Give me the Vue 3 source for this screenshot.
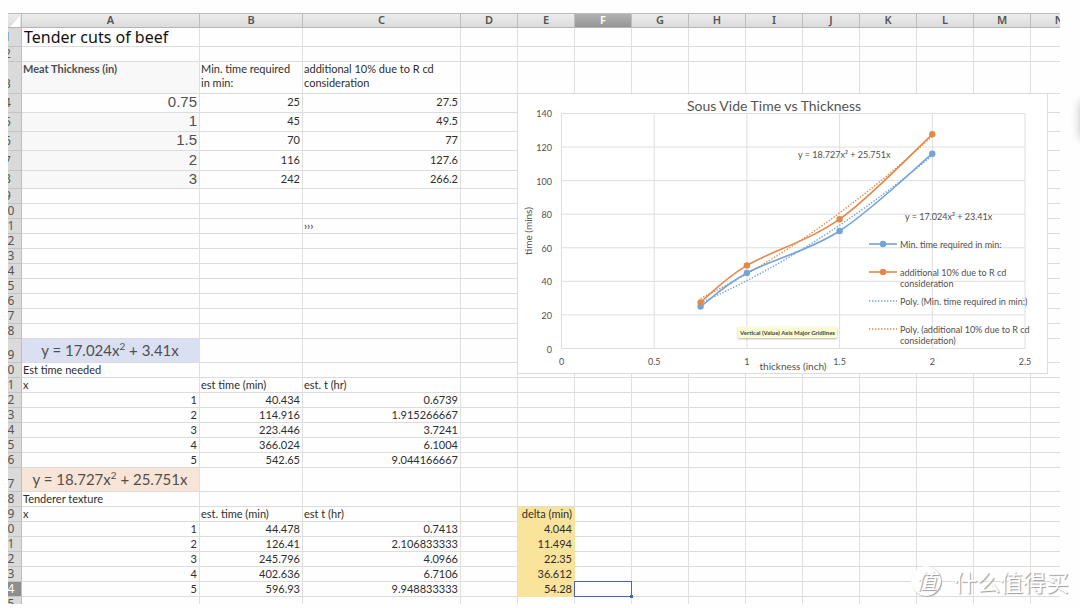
<script setup>
const columns = ['A', 'B', 'C', 'D', 'E', 'F', 'G', 'H', 'I', 'J', 'K', 'L', 'M', 'N']

const content = {
  1: { size: 'mid', A: ['Tender cuts of beef', 'title'] },
  3: {
    size: 'double',
    A: ['Meat Thickness (in)', 'shade strong top'],
    B: ['Min. time required\nin min:', 'top'],
    C: ['additional 10% due to R cd\nconsideration', 'top'],
  },
  4: { size: 'mid', A: ['0.75', 'num arial'], B: ['25', 'num'], C: ['27.5', 'num'] },
  5: { size: 'mid', A: ['1', 'num arial shade'], B: ['45', 'num'], C: ['49.5', 'num'] },
  6: { size: 'mid', A: ['1.5', 'num arial shade'], B: ['70', 'num'], C: ['77', 'num'] },
  7: { size: 'mid-plus', A: ['2', 'num arial shade'], B: ['116', 'num'], C: ['127.6', 'num'] },
  8: { size: 'mid-less', A: ['3', 'num arial shade'], B: ['242', 'num'], C: ['266.2', 'num'] },
  11: { C: ['›››', ''] },
  19: { size: 'tall', A: ['y = 17.024x', 'formula blue', ' + 3.41x'] },
  20: { A: ['Est time needed', ''] },
  21: { A: ['x', ''], B: ['est time (min)', ''], C: ['est. t (hr)', ''] },
  22: { A: ['1', 'num'], B: ['40.434', 'num'], C: ['0.6739', 'num'] },
  23: { A: ['2', 'num'], B: ['114.916', 'num'], C: ['1.915266667', 'num'] },
  24: { A: ['3', 'num'], B: ['223.446', 'num'], C: ['3.7241', 'num'] },
  25: { A: ['4', 'num'], B: ['366.024', 'num'], C: ['6.1004', 'num'] },
  26: { A: ['5', 'num'], B: ['542.65', 'num'], C: ['9.044166667', 'num'] },
  27: { size: 'tall', A: ['y = 18.727x', 'formula peach', ' + 25.751x'] },
  28: { A: ['Tenderer texture', ''] },
  29: { A: ['x', ''], B: ['est. time (min)', ''], C: ['est t (hr)', ''], E: ['delta (min)', 'num yellow'] },
  30: { A: ['1', 'num'], B: ['44.478', 'num'], C: ['0.7413', 'num'], E: ['4.044', 'num yellow'] },
  31: { A: ['2', 'num'], B: ['126.41', 'num'], C: ['2.106833333', 'num'], E: ['11.494', 'num yellow'] },
  32: { A: ['3', 'num'], B: ['245.796', 'num'], C: ['4.0966', 'num'], E: ['22.35', 'num yellow'] },
  33: { A: ['4', 'num'], B: ['402.636', 'num'], C: ['6.7106', 'num'], E: ['36.612', 'num yellow'] },
  34: { A: ['5', 'num'], B: ['596.93', 'num'], C: ['9.948833333', 'num'], E: ['54.28', 'num yellow'], F: ['', 'active'] },
}

const rows = Array.from({ length: 35 }, (_, i) => {
  const number = i + 1
  const row = content[number] || {}
  return {
    number,
    size: row.size || 'base',
    cells: columns.map((name) => {
      const [text = '', kind = '', rest = ''] = row[name] || []
      return { name, text, kind, rest }
    }),
  }
})

const px = (x) => 44.5 + x * 185.4
const py = (y) => 255.5 - y * 1.679

const xTicks = [0, 0.5, 1, 1.5, 2, 2.5]
const yTicks = [0, 20, 40, 60, 80, 100, 120, 140]

const minTime = [[0.75, 25], [1, 45], [1.5, 70], [2, 116]]
const extraTime = [[0.75, 27.5], [1, 49.5], [1.5, 77], [2, 127.6]]

function smooth(points) {
  const p = points.map(([x, y]) => [px(x), py(y)])
  let d = `M${p[0][0]} ${p[0][1]}`
  for (let i = 0; i < p.length - 1; i++) {
    const before = p[i - 1] || p[i]
    const after = p[i + 2] || p[i + 1]
    const c1 = [0, 1].map((k) => p[i][k] + (p[i + 1][k] - before[k]) / 6)
    const c2 = [0, 1].map((k) => p[i + 1][k] - (after[k] - p[i][k]) / 6)
    d += `C${c1.join(' ')} ${c2.join(' ')} ${p[i + 1].join(' ')}`
  }
  return d
}

function trend(a, b) {
  const steps = Array.from({ length: 26 }, (_, i) => 0.75 + i * 0.05)
  return steps.map((x) => `${px(x)},${py(a * x * x + b * x)}`).join(' ')
}

const legend = [
  { y: 151, tone: 'blue-line', lines: ['Min. time required in min:'], marker: true },
  { y: 179, tone: 'orange-line', lines: ['additional 10% due to R cd', 'consideration'], marker: true },
  { y: 208, tone: 'blue-line', lines: ['Poly. (Min. time required in min:)'], marker: false },
  { y: 236, tone: 'orange-line', lines: ['Poly. (additional 10% due to R cd', 'consideration)'], marker: false },
]
</script>

<template>
  <main class="page">
    <div class="sheet">
      <table class="grid">
        <colgroup>
          <col class="col-head" />
          <col v-for="name in columns" :key="name" :class="'col-' + name" />
        </colgroup>
        <thead>
          <tr>
            <th class="corner">
              <svg viewBox="0 0 10 11" width="10" height="11" aria-hidden="true"><path d="M10 0V11H0Z" fill="#fff" /></svg>
            </th>
            <th v-for="name in columns" :key="name" scope="col" :class="{ chosen: name === 'F' }">{{ name }}</th>
          </tr>
        </thead>
        <tbody>
          <tr v-for="row in rows" :key="row.number" :class="row.size">
            <th scope="row" :class="{ chosen: row.number === 34 }">{{ row.number }}</th>
            <td v-for="cell in row.cells" :key="cell.name" :class="cell.kind">{{ cell.text }}<sup v-if="cell.rest">2</sup>{{ cell.rest }}</td>
          </tr>
        </tbody>
      </table>

      <figure class="chart">
        <svg viewBox="0 0 531 281" width="531" height="281" role="img" aria-label="Sous Vide Time vs Thickness">
          <rect class="frame" x="0.5" y="0.5" width="530" height="280" />
          <g class="gridlines">
            <line v-for="x in xTicks" :key="'x' + x" :x1="px(x)" :x2="px(x)" :y1="py(140)" :y2="py(0)" />
            <line v-for="y in yTicks" :key="'y' + y" :x1="px(0)" :x2="px(2.5)" :y1="py(y)" :y2="py(y)" />
          </g>
          <text class="heading" x="257" y="18" text-anchor="middle">Sous Vide Time vs Thickness</text>
          <g class="label">
            <text v-for="y in yTicks" :key="'ly' + y" x="35" :y="py(y) + 4" text-anchor="end">{{ y }}</text>
            <text v-for="x in xTicks" :key="'lx' + x" :x="px(x)" y="272" text-anchor="middle">{{ x }}</text>
          </g>
          <text class="axis" x="276" y="277" text-anchor="middle">thickness (inch)</text>
          <text class="axis" transform="translate(15 138) rotate(-90)" text-anchor="middle">time (mins)</text>

          <polyline class="dots blue-line" :points="trend(17.024, 23.41)" />
          <polyline class="dots orange-line" :points="trend(18.727, 25.751)" />
          <path class="curve blue-line" :d="smooth(minTime)" />
          <circle v-for="p in minTime" :key="'b' + p[0]" class="blue-dot" :cx="px(p[0])" :cy="py(p[1])" r="3.2" />
          <path class="curve orange-line" :d="smooth(extraTime)" />
          <circle v-for="p in extraTime" :key="'o' + p[0]" class="orange-dot" :cx="px(p[0])" :cy="py(p[1])" r="3.2" />

          <text class="label" x="281" y="65">y = 18.727x² + 25.751x</text>
          <text class="label" x="388" y="127">y = 17.024x² + 23.41x</text>

          <g v-for="item in legend" :key="item.y">
            <line :class="[item.tone, item.marker ? 'curve' : 'dots']" x1="352" x2="380" :y1="item.y" :y2="item.y" />
            <circle v-if="item.marker" :class="item.tone === 'blue-line' ? 'blue-dot' : 'orange-dot'" cx="366" :cy="item.y" r="3.2" />
            <text v-for="(line, i) in item.lines" :key="line" class="label" x="383" :y="item.y + 4 + i * 11">{{ line }}</text>
          </g>
        </svg>
        <div class="tooltip" role="tooltip">Vertical (Value) Axis Major Gridlines</div>
      </figure>
    </div>

    <div class="edge-shadow"></div>
    <div class="watermark"><span class="seal">值</span><span>什么值得买</span></div>
  </main>
</template>

<style>
body {
  margin: 0;
  background: #fefefe;
}
</style>

<style scoped>
.page {
  position: relative;
  box-sizing: border-box;
  height: 100vh;
  padding: 13px 20px 4px 8px;
  overflow: hidden;
  font-family: Lato, "Liberation Sans", sans-serif;
  color: #2e2e2e;
}

.sheet {
  position: relative;
  height: 100%;
  overflow: hidden;
}

.grid {
  width: 1094px;
  margin-left: -14px;
  table-layout: fixed;
  border-collapse: separate;
  border-spacing: 0;
  font-size: 11px;
  line-height: 14px;
}

.col-head { width: 28px; }
.col-A { width: 178px; }
.col-B { width: 103px; }
.col-C { width: 158px; }
.col-D, .col-E, .col-F, .col-G, .col-H, .col-I, .col-J,
.col-K, .col-L, .col-M, .col-N { width: 57px; }

th, td {
  box-sizing: border-box;
  padding: 0 2px 0 1px;
  border-right: 1px solid #e0e0e0;
  border-bottom: 1px solid #dcdcdc;
  text-align: left;
  vertical-align: middle;
  white-space: pre;
}

th {
  padding: 0;
  font-family: "Noto Sans", "Open Sans", sans-serif;
  font-size: 12px;
  font-weight: 400;
  color: #555;
  text-align: center;
  vertical-align: bottom;
}

thead th {
  height: 15px;
  line-height: 12px;
  vertical-align: top;
  border-top: 1px solid #bbb;
  border-bottom-color: #b4b4b4;
  border-right-color: #bdbdbd;
  background: linear-gradient(#ececec, #dcdcdc);
  font-size: 11px;
  font-weight: 600;
}

thead .corner {
  text-align: right;
  line-height: 0;
  vertical-align: bottom;
}

.corner svg { margin-right: 1px; }

tbody th {
  background: #dadada;
  border-right-color: #bdbdbd;
  border-bottom-color: #c4c4c4;
}

thead th.chosen {
  background: linear-gradient(#b2b2b2, #969696);
  color: #fff;
}

tbody th.chosen {
  background: #8e8e8e;
  color: #fff;
}

.base { height: 15px; }
.mid-less { height: 18px; }
.mid { height: 19px; }
.mid-plus { height: 20px; }
.tall { height: 24px; }
.double { height: 32px; }

.double th,
.mid th,
.mid-plus th,
.mid-less th { padding-bottom: 2px; }

.mid .num,
.mid-plus .num,
.mid-less .num { padding-bottom: 2px; }

.num { text-align: right; }

.top {
  vertical-align: top;
  line-height: 14px;
}

.title {
  padding-left: 2px;
  font-family: "Noto Sans", sans-serif;
  font-size: 16px;
  line-height: 18px;
  color: #111;
}

.arial {
  font-family: "Liberation Sans", Arial, sans-serif;
  font-size: 15px;
  line-height: 14px;
  color: #505050;
}

.strong {
  font-weight: 700;
  color: #505050;
}

.shade { background: #f8f8f8; }

.formula {
  font-size: 15px;
  line-height: 23px;
  text-align: center;
  color: #505050;
}

.formula sup {
  font-size: 10px;
  line-height: 0;
}

.blue { background: #dae0f1; }
.peach { background: #f9e4d8; }

.yellow {
  background: #fae49b;
  border-color: #fae49b;
}

.active { position: relative; }

.active::before {
  content: "";
  position: absolute;
  inset: -1px;
  border: 1px solid #4763bd;
}

.active::after {
  content: "";
  position: absolute;
  right: -2px;
  bottom: -2px;
  width: 3px;
  height: 3px;
  background: #4763bd;
}

.chart {
  position: absolute;
  left: 509px;
  top: 80px;
  margin: 0;
}

.chart svg { display: block; }

.frame {
  fill: #fff;
  stroke: #dcdcdc;
}

.gridlines line {
  stroke: #dedede;
  stroke-width: 1;
}

.heading {
  font-size: 14px;
  fill: #555;
}

.label {
  font-size: 9px;
  fill: #505050;
}

.axis {
  font-size: 10px;
  fill: #505050;
}

.curve {
  fill: none;
  stroke-width: 1.6;
}

.dots {
  fill: none;
  stroke-width: 1.4;
  stroke-dasharray: 1.4 1.6;
}

.blue-line { stroke: #74a3d8; }
.orange-line { stroke: #e2894a; }
.blue-dot { fill: #74a3d8; }
.orange-dot { fill: #e2894a; }

.tooltip {
  position: absolute;
  left: 221px;
  top: 234px;
  padding: 0 2px;
  font-family: Lato, sans-serif;
  font-size: 6px;
  font-weight: 700;
  line-height: 11px;
  white-space: nowrap;
  color: #444;
  background: #fbfbd2;
  box-shadow: 0 1px 2px rgba(0, 0, 0, 0.3);
}

.edge-shadow {
  position: absolute;
  right: -10px;
  top: 102px;
  width: 10px;
  height: 36px;
  box-shadow: 0 0 10px rgba(0, 0, 0, 0.25);
}

.watermark {
  position: absolute;
  right: 11px;
  bottom: 10px;
  display: flex;
  align-items: center;
  gap: 13px;
  font-family: "Noto Sans CJK SC", sans-serif;
  font-size: 23px;
  line-height: 34px;
  color: #fff;
  text-shadow: 1px 1px 1px #999;
}

.seal {
  width: 28px;
  height: 28px;
  border: 1px solid #fff;
  border-radius: 50%;
  background: #fefefe;
  box-shadow: 1px 1px 1px #aaa;
  font-size: 21px;
  font-style: italic;
  line-height: 26px;
  text-align: center;
}
</style>
